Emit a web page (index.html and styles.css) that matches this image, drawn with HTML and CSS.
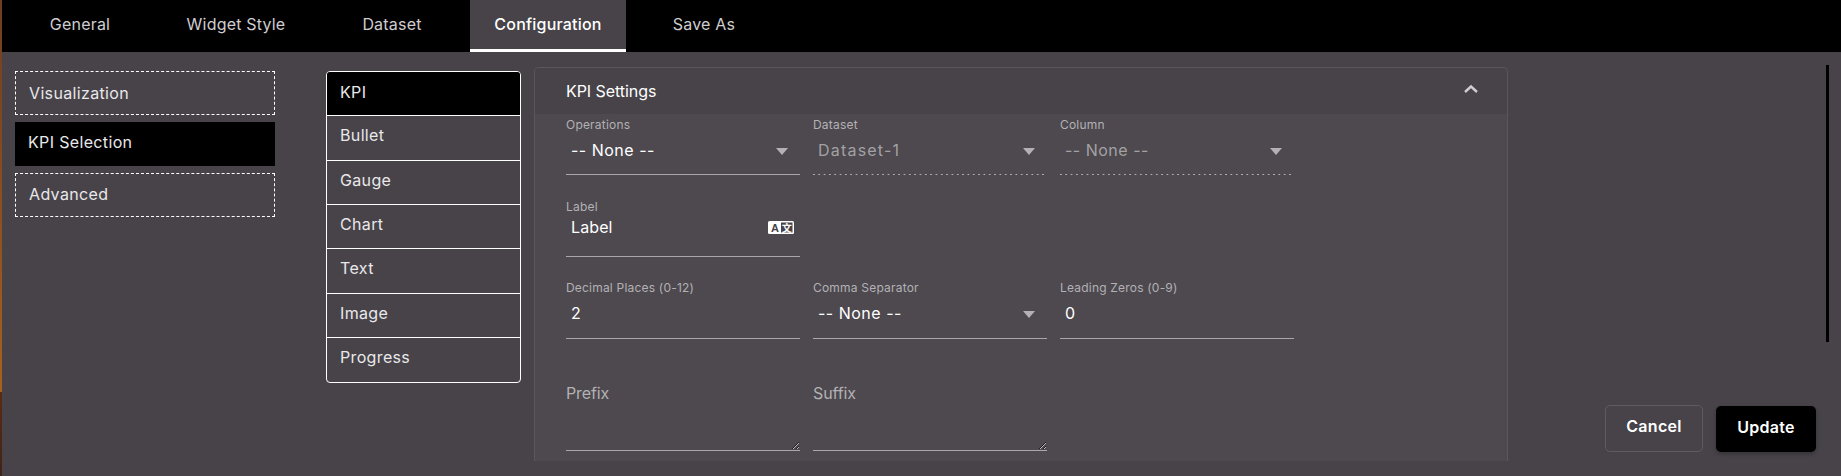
FILE: index.html
```html
<!DOCTYPE html>
<html lang="en">
<head>
  <meta charset="UTF-8">
  <meta name="viewport" content="width=device-width, initial-scale=1.0">
  <title>KPI Configuration</title>
  <link rel="stylesheet" href="styles.css">
</head>
<body>
  <div class="edge"></div>
  <div class="dialog">
    <div class="tabs">
      <div class="tab">General</div>
      <div class="tab">Widget Style</div>
      <div class="tab">Dataset</div>
      <div class="tab active">Configuration</div>
      <div class="tab">Save As</div>
    </div>

    <div class="content">
      <div class="side-nav">
        <div class="nav-item">Visualization</div>
        <div class="nav-item selected">KPI Selection</div>
        <div class="nav-item">Advanced</div>
      </div>

      <div class="type-list">
        <div class="type-item selected">KPI</div>
        <div class="type-item">Bullet</div>
        <div class="type-item">Gauge</div>
        <div class="type-item">Chart</div>
        <div class="type-item">Text</div>
        <div class="type-item">Image</div>
        <div class="type-item">Progress</div>
      </div>

      <div class="settings-card">
        <div class="card-header">
          <span class="card-title">KPI Settings</span>
          <svg class="chevron" width="16" height="10" viewBox="0 0 16 10"><path d="M2 8 L8 2.5 L14 8" fill="none" stroke="#cfcdd0" stroke-width="2.4"/></svg>
        </div>
        <div class="card-body">
          <div class="field-row row-ops">
            <div class="field">
              <div class="field-label">Operations</div>
              <div class="field-value">-- None --<span class="arrow"></span></div>
            </div>
            <div class="field disabled">
              <div class="field-label">Dataset</div>
              <div class="field-value wide">Dataset-1<span class="arrow"></span></div>
            </div>
            <div class="field disabled">
              <div class="field-label">Column</div>
              <div class="field-value">-- None --<span class="arrow"></span></div>
            </div>
          </div>

          <div class="field-row row-label">
            <div class="field">
              <div class="field-label">Label</div>
              <div class="field-value">Label
                <svg class="translate" width="26" height="13" viewBox="0 0 26 13">
                  <rect x="0" y="0" width="26" height="13" rx="1.5" fill="#fff"/>
                  <rect x="13" y="1.5" width="11.5" height="10" fill="#474349"/>
                  <text x="7" y="10.5" class="translate-a">A</text>
                  <text x="18.7" y="10.5" class="translate-b">文</text>
                </svg>
              </div>
            </div>
          </div>

          <div class="field-row row-number">
            <div class="field">
              <div class="field-label">Decimal Places (0-12)</div>
              <div class="field-value">2</div>
            </div>
            <div class="field">
              <div class="field-label">Comma Separator</div>
              <div class="field-value">-- None --<span class="arrow"></span></div>
            </div>
            <div class="field">
              <div class="field-label">Leading Zeros (0-9)</div>
              <div class="field-value">0</div>
            </div>
          </div>

          <div class="field-row row-text">
            <label class="area-field">
              <span class="area-label">Prefix</span>
              <textarea class="area-input"></textarea>
            </label>
            <label class="area-field">
              <span class="area-label">Suffix</span>
              <textarea class="area-input"></textarea>
            </label>
          </div>
        </div>
      </div>

      <div class="right-side">
        <div class="scroll-thumb"></div>
        <div class="actions">
          <button class="btn cancel">Cancel</button>
          <button class="btn update">Update</button>
        </div>
      </div>
    </div>
  </div>
</body>
</html>
```

FILE: styles.css
```css
* {
  margin: 0;
  padding: 0;
  box-sizing: border-box;
}

html, body {
  height: 476px;
  overflow: hidden;
}

body {
  display: flex;
  font-family: Inter, "Noto Sans", sans-serif;
  font-size: 16px;
  color: #e9e8ea;
  background: #474349;
}

.edge {
  width: 2px;
  background: linear-gradient(to bottom, #6e3d22 0, #a8601e 392px, #5a2a14 392px, #3f2418 100%);
}

.dialog {
  flex: 1;
  display: flex;
  flex-direction: column;
}

.tabs {
  display: flex;
  height: 52px;
  background: #000;
}

.tab {
  width: 156px;
  line-height: 49px;
  text-align: center;
  color: #cfcdd0;
  letter-spacing: 0.2px;
}

.tab.active {
  background: #474349;
  border-bottom: 3px solid #fff;
  color: #fff;
  font-weight: 500;
  letter-spacing: 0.2px;
}

.content {
  flex: 1;
  display: flex;
  align-items: flex-start;
}

.side-nav {
  width: 260px;
  margin: 19px 0 0 13px;
  display: flex;
  flex-direction: column;
  gap: 7px;
}

.nav-item {
  height: 44px;
  padding-left: 13px;
  line-height: 42px;
  border: 1px dashed #fff;
  letter-spacing: 0.35px;
}

.nav-item:last-child {
  line-height: 40px;
}

.nav-item.selected {
  background: #000;
  border-color: #000;
  padding-left: 12px;
  line-height: 38px;
}

.type-list {
  width: 195px;
  margin: 19px 0 0 51px;
  border: 1px solid #fff;
  border-radius: 4px;
  overflow: hidden;
}

.type-item {
  height: 44.33px;
  padding-left: 13px;
  line-height: 39px;
  border-bottom: 1px solid #fff;
  letter-spacing: 0.35px;
}

.type-item:last-child {
  border-bottom: none;
}

.type-item.selected {
  background: #000;
  line-height: 40px;
}

.settings-card {
  width: 974px;
  height: 394px;
  margin: 15px 0 0 13px;
  border: 1px solid #5a565c;
  border-bottom: none;
  border-radius: 5px 5px 0 0;
  background: #4d494f;
  overflow: hidden;
}

.card-header {
  height: 46px;
  padding: 0 28px 0 31px;
  display: flex;
  align-items: center;
  justify-content: space-between;
  background: #474349;
  color: #fff;
}

.card-title {
  margin-bottom: 1px;
  letter-spacing: -0.05px;
}

.chevron {
  margin-bottom: 4px;
}

.card-body {
  padding: 0 0 0 31px;
}

.field-row {
  display: flex;
  gap: 13px;
}

.field {
  width: 234px;
  border-bottom: 1px solid #a9a7aa;
}

.field-label {
  font-size: 12px;
  line-height: 16px;
  color: #b3b1b4;
  letter-spacing: 0.2px;
}

.field-value {
  position: relative;
  padding-left: 5px;
  color: #fff;
  letter-spacing: 0.5px;
}

.field-value.wide {
  letter-spacing: 1.2px;
}

.disabled {
  border-bottom: none;
  background: linear-gradient(to right, #b3b1b4 40%, transparent 40%) left bottom / 5.33px 1px repeat-x;
}

.disabled .field-value {
  color: #a3a1a4;
}

.arrow {
  position: absolute;
  right: 12px;
  top: 8px;
  border-left: 6px solid transparent;
  border-right: 6px solid transparent;
  border-top: 7px solid #b3b1b4;
}

.row-ops {
  padding-top: 3px;
}

.row-ops .field {
  height: 58px;
}

.row-ops .field-value {
  margin-top: 7px;
}

.row-label {
  margin-top: 24px;
}

.row-label .field {
  height: 58px;
}

.row-label .field-value {
  margin-top: 2px;
  letter-spacing: 0.1px;
}

.translate {
  position: absolute;
  right: 6px;
  top: 4px;
}

.translate-a {
  font: 700 11px "Liberation Sans", sans-serif;
  fill: #474349;
  text-anchor: middle;
}

.translate-b {
  font: 700 10px "Noto Sans CJK SC", sans-serif;
  fill: #fff;
  text-anchor: middle;
}

.row-number {
  margin-top: 23px;
}

.row-number .field {
  height: 59px;
}

.row-number .field-value {
  margin-top: 7px;
}

.row-text {
  margin-top: 42px;
}

.area-field {
  width: 234px;
  display: flex;
  flex-direction: column;
}

.area-label {
  line-height: 24px;
  color: #b3b1b4;
  letter-spacing: -0.1px;
}

.area-input {
  display: block;
  width: 234px;
  height: 46px;
  background: transparent;
  border: none;
  border-bottom: 1px solid #a9a7aa;
  outline: none;
  resize: vertical;
  color: #fff;
  font: inherit;
}

.right-side {
  flex: 1;
  position: relative;
  align-self: stretch;
  display: flex;
  flex-direction: column;
  justify-content: flex-end;
  align-items: flex-end;
  padding: 0 25px 24px 0;
}

.scroll-thumb {
  position: absolute;
  right: 12px;
  top: 13px;
  width: 3px;
  height: 277px;
  background: #000;
}

.actions {
  display: flex;
  align-items: flex-end;
  gap: 13px;
}

.btn {
  font: 600 16px Inter, "Noto Sans", sans-serif;
  padding-bottom: 5px;
  color: #fff;
  border-radius: 5px;
  background: transparent;
  letter-spacing: 0.3px;
}

.cancel {
  width: 98px;
  height: 47px;
  border: 1px solid #5f5b61;
}

.update {
  width: 100px;
  height: 46px;
  border: none;
  background: #000;
  box-shadow: 0 2px 4px rgba(0, 0, 0, 0.25);
}
```
